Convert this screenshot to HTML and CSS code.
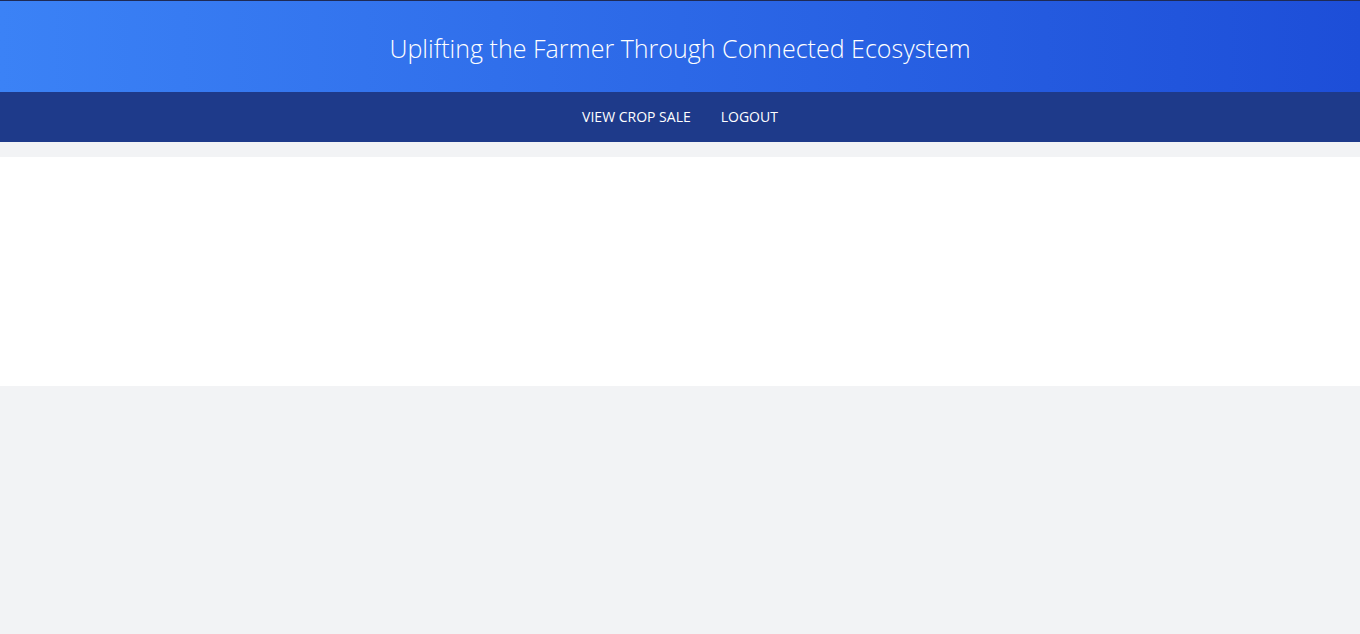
FILE: index.html
```html
<!DOCTYPE html>
<html lang="en">
<head>
<meta charset="utf-8">
<title>Uplifting the Farmer</title>
<link rel="stylesheet" href="styles.css">
</head>
<body>
<header class="hero">
  <h1 class="hero-title">Uplifting the Farmer Through Connected Ecosystem</h1>
</header>
<nav class="nav">
  <a class="nav-link" href="#">VIEW CROP SALE</a>
  <a class="nav-link" href="#">LOGOUT</a>
</nav>
<main class="main">
  <section class="panel"></section>
</main>
</body>
</html>
```
FILE: styles.css
```css
html, body { margin: 0; padding: 0; }
body {
  background: #f2f3f5;
  font-family: "Open Sans", "Noto Sans", sans-serif;
  min-height: 634px;
}
.hero {
  border-top: 1px solid #1e2a55;
  height: 91px;
  box-sizing: border-box;
  padding-top: 2px;
  background: linear-gradient(90deg, #3b82f6 0%, #1d4ed8 100%);
  display: flex;
  align-items: center;
  justify-content: center;
}
.hero-title {
  margin: 0;
  color: #fff;
  font-weight: 300;
  font-size: 25px;
  letter-spacing: 0.02px;
}
.hero { height: 92px; }
.nav {
  height: 50px;
  box-sizing: border-box;
  padding-bottom: 2px;
  background: #1e3a8a;
  display: flex;
  align-items: center;
  justify-content: center;
  gap: 30px;
}
.nav-link {
  color: #fff;
  text-decoration: none;
  font-size: 14px;
  font-weight: 400;
}
.main { padding-top: 15px; }
.panel {
  background: #fff;
  height: 229px;
}
```
